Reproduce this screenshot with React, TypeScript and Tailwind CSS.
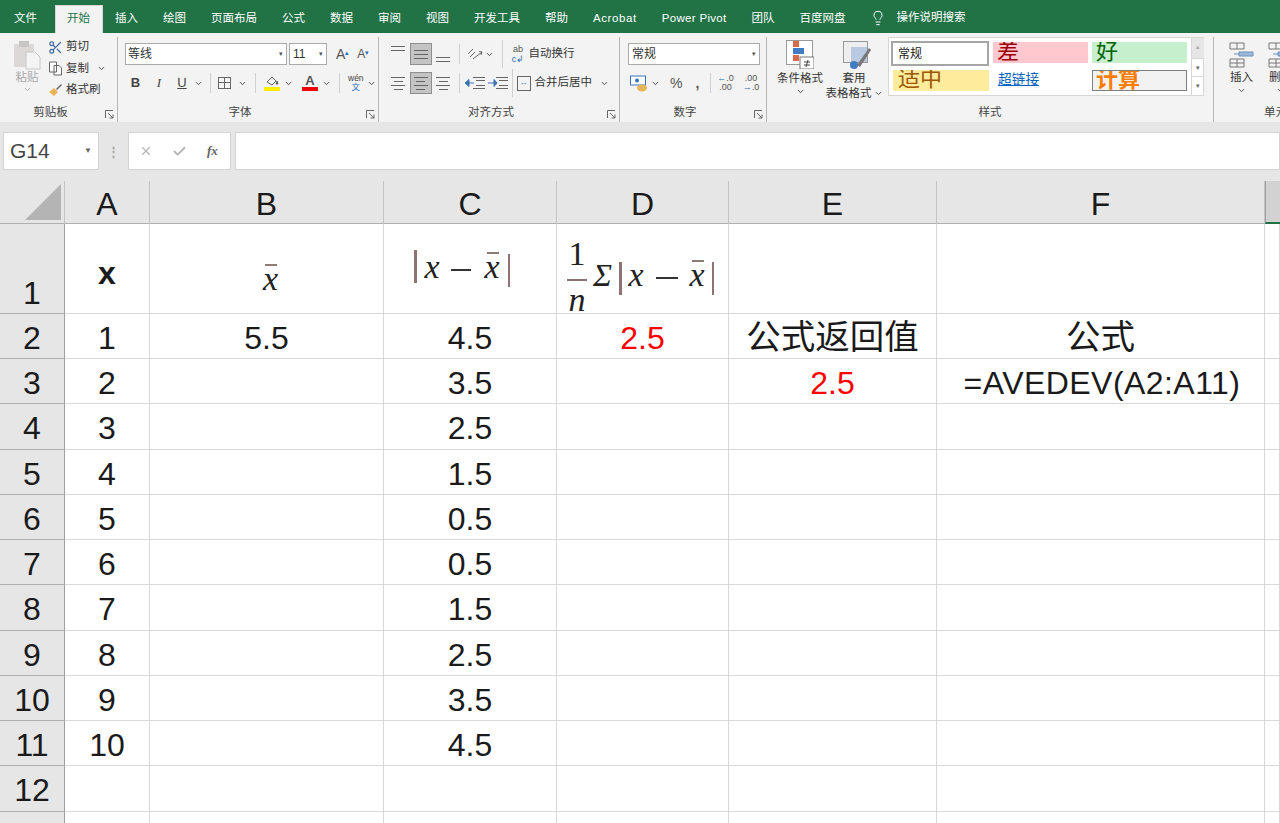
import { ChevronDown, Lightbulb, Scissors, X, Check } from "lucide-react";

const sans = "font-['Liberation_Sans','Noto_Sans_CJK_SC',sans-serif]";
const tabs = [
  { label: "文件", extra: "mr-[5px]" },
  { label: "开始", active: true },
  { label: "插入" },
  { label: "绘图" },
  { label: "页面布局" },
  { label: "公式" },
  { label: "数据" },
  { label: "审阅" },
  { label: "视图" },
  { label: "开发工具" },
  { label: "帮助" },
  { label: "Acrobat", extra: "tracking-[0.6px]" },
  { label: "Power Pivot", extra: "tracking-[0.3px]" },
  { label: "团队" },
  { label: "百度网盘" },
];
const columns = ["A", "B", "C", "D", "E", "F"];
const values = ["4.5", "3.5", "2.5", "1.5", "0.5", "0.5", "1.5", "2.5", "3.5", "4.5"];

function Caret({ className = "" }: { className?: string }) {
  return <ChevronDown size={9} strokeWidth={2.5} className={`shrink-0 text-[#444] ${className}`} />;
}

function Launcher() {
  return (
    <svg width="9" height="9" viewBox="0 0 9 9" className="absolute bottom-[3px] right-[3px] text-[#666]" fill="none" stroke="currentColor">
      <path d="M.5 8V.5H8M3 3l5 5M8 4.500V8H4.500" />
    </svg>
  );
}

function Lines({ rows, active = false, align = "justify-center" }: { rows: number[]; active?: boolean; align?: string }) {
  return (
    <span className={`flex h-[22px] w-[22.5px] shrink-0 flex-col items-center gap-[3px] py-[3px] ${align} ${active ? "border border-[#8f8f8f] bg-[#c4c4c4]" : ""}`}>
      {rows.map((w, i) => (
        <span key={i} className="h-px bg-[#666]" style={{ width: w }} />
      ))}
    </span>
  );
}

function Group({ label, width, inset = 16, launcher = true, children }: { label: string; width: number; inset?: number; launcher?: boolean; children: React.ReactNode }) {
  return (
    <div className="relative flex h-[85px] shrink-0 flex-col border-r border-[#b5b5b5]" style={{ width }}>
      <div className="min-h-0 flex-1">{children}</div>
      <div className="pb-[3px] text-center text-[11.500px] leading-[13px] text-[#444]" style={{ paddingRight: inset }}>{label}</div>
      {launcher && <Launcher />}
    </div>
  );
}

function Ribbon() {
  return (
    <div className="flex h-[89px] items-start bg-[#f3f3f3] pt-[4px] text-[11.500px] text-[#333]">
      <Group label="剪贴板" width={118}>
        <div className="flex">
          <div className="ml-[13px] mt-[4px] flex w-[28px] flex-col items-center text-[#a8a8a8]">
            <svg width="28" height="29" viewBox="0 0 28 29">
              <rect x="1" y="3" width="20" height="23" rx="1" fill="#dcd8d8" />
              <rect x="6" y="0" width="10" height="6" fill="#c9c5c5" />
              <path d="M13 11h9l5 5v12H13z" fill="#f4f4f4" stroke="#c8c8c8" />
            </svg>
            <span className="mt-[1px] leading-[13px]">粘贴</span>
            <Caret className="mt-[1px] opacity-40" />
          </div>
          <div className="ml-[7px] flex flex-col gap-[4.500px] pt-[1.500px]">
            <div className="flex h-[17px] items-center gap-[3px]">
              <Scissors size={15} className="text-[#3f6ea5]" />
              <span>剪切</span>
            </div>
            <div className="flex h-[17px] items-center gap-[3px]">
              <svg width="15" height="15" viewBox="0 0 15 15" fill="#fff" stroke="#666"><path d="M1.500 1h7v10h-7zM6 4.500h5l2.500 2.500v7H6z" /></svg>
              <span>复制</span>
              <Caret className="ml-[5px]" />
            </div>
            <div className="flex h-[17px] items-center gap-[3px]">
              <svg width="15" height="15" viewBox="0 0 15 15"><path d="M1 9l5-4 4 4-4 4z" fill="#e8b458" /><path d="M8 6l5-5 1 1-5 5z" fill="#666" /></svg>
              <span>格式刷</span>
            </div>
          </div>
        </div>
      </Group>
      <Group label="字体" width={261}>
        <div className="ml-[7px] flex items-center gap-[2px] pt-[6px]">
          <div className="flex h-[22px] w-[162px] items-center justify-between border border-[#ababab] bg-white pl-[2px] pr-[3px] text-[12px]">
            等线<span className="text-[7px] text-[#555]">▾</span>
          </div>
          <div className="flex h-[22px] w-[38px] items-center justify-between border border-[#ababab] bg-white pl-[3px] pr-[3px] text-[12px]">
            11<span className="text-[7px] text-[#555]">▾</span>
          </div>
          <span className="ml-[7px] text-[14px] text-[#555]">A<sup className="text-[7px] text-[#2b6cb0]">▴</sup></span>
          <span className="ml-[6px] text-[12px] text-[#555]">A<sup className="text-[7px] text-[#2b6cb0]">▾</sup></span>
        </div>
        <div className="ml-[8px] mt-[7px] flex h-[22px] items-center text-[13px] text-[#444]">
          <span className="w-[19px] text-center font-bold">B</span>
          <span className="ml-[4px] w-[20px] text-center font-['Liberation_Serif',serif] italic">I</span>
          <span className="ml-[3px] w-[20px] text-center underline">U</span>
          <Caret className="ml-[2px]" />
          <span className="mx-[7px] h-[20px] w-px bg-[#d0d0d0]" />
          <span className="grid h-[12px] w-[13px] grid-cols-2 grid-rows-2 border border-[#666]">
            <span className="border-r border-b border-[#666]" />
            <span className="border-b border-[#666]" />
            <span className="border-r border-[#666]" />
          </span>
          <Caret className="ml-[7px]" />
          <span className="mx-[8px] h-[20px] w-px bg-[#d0d0d0]" />
          <span className="flex w-[16px] flex-col items-center">
            <svg width="14" height="12" viewBox="0 0 14 12" fill="none" stroke="#666"><path d="M2 7l5-5 4 4-4 4z" /><path d="M12 6l1 3h-2z" fill="#3b73b5" /></svg>
            <span className="h-[4px] w-[16px] bg-[#ffee00]" />
          </span>
          <Caret className="ml-[4px]" />
          <span className="ml-[9px] flex w-[16px] flex-col items-center">
            <span className="text-[13px] font-bold leading-[12px] text-[#555]">A</span>
            <span className="h-[4px] w-[16px] bg-[#ef0000]" />
          </span>
          <Caret className="ml-[4px]" />
          <span className="mx-[8px] h-[20px] w-px bg-[#d0d0d0]" />
          <span className="flex flex-col items-center text-[8.500px] leading-[9px]">
            wén<span className="text-[#2b6cb0]">文</span>
          </span>
          <Caret className="ml-[3px]" />
        </div>
      </Group>
      <Group label="对齐方式" width={241}>
        <div className="ml-[8px] mt-[6px] flex h-[22px] items-center">
          <Lines rows={[14, 14]} align="justify-start" />
          <Lines rows={[14, 14, 14]} active />
          <Lines rows={[14, 14]} align="justify-end" />
          <span className="mx-[4px] h-[20px] w-px bg-[#d0d0d0]" />
          <svg width="18" height="16" viewBox="0 0 18 16" fill="none" stroke="#666" className="ml-[2px]">
            <path d="M2 8l5-5M4 11l5-5M7 13L16 6M13 5.500l3 .5-1 3" />
          </svg>
          <Caret className="ml-[1px]" />
          <span className="ml-[8px] mr-[8px] h-[28px] w-px bg-[#d0d0d0]" />
          <span className="ml-[1px] flex w-[13px] flex-col items-center text-[9px] leading-[10px] text-[#555]">
            <span>ab</span>
            <span className="text-[#2b6cb0]">c↲</span>
          </span>
          <span className="ml-[4px] text-[11.500px]">自动换行</span>
        </div>
        <div className="ml-[8px] mt-[7px] flex h-[22px] items-center">
          <Lines rows={[14, 9, 14, 9]} />
          <Lines rows={[14, 9, 14, 9]} active />
          <Lines rows={[14, 9, 14, 9]} />
          <span className="mx-[4px] h-[20px] w-px bg-[#d0d0d0]" />
          <svg width="22" height="14" viewBox="0 0 22 14" fill="none" stroke="#666" className="shrink-0">
            <path d="M9 1.500h12M12 4.500h9M12 9.500h9M9 12.500h12" />
            <path d="M1 7h9M5 3.500L1 7l4 3.500z" stroke="#3b73b5" fill="#3b73b5" />
          </svg>
          <svg width="22" height="14" viewBox="0 0 22 14" fill="none" stroke="#666" className="ml-[1px] shrink-0">
            <path d="M9 1.500h12M12 4.500h9M12 9.500h9M9 12.500h12" />
            <path d="M1 7h9M7 3.500L10 7l-3 3.500z" stroke="#3b73b5" fill="#3b73b5" />
          </svg>
          <span className="ml-[3px] mr-[4px] h-[28px] w-px bg-[#d0d0d0]" />
          <span className="flex h-[15px] w-[14px] shrink-0 items-center justify-center border border-[#666] text-[8px] leading-none text-[#2b6cb0]">↔</span>
          <span className="ml-[4px] whitespace-nowrap text-[11.500px]">合并后居中</span>
          <Caret className="ml-[8px]" />
        </div>
      </Group>
      <Group label="数字" width={147}>
        <div className="ml-[8px] mt-[6px] flex h-[22px] w-[132px] items-center justify-between border border-[#ababab] bg-white pl-[3px] pr-[3px] text-[12px]">
          常规<span className="text-[7px] text-[#555]">▾</span>
        </div>
        <div className="ml-[10px] mt-[6px] flex h-[24px] items-center text-[14px] text-[#555]">
          <svg width="18" height="17" viewBox="0 0 18 17"><rect x="0.500" y="1" width="15" height="9" fill="#fff" stroke="#3b73b5" /><circle cx="7" cy="5.500" r="2" fill="#3b73b5" /><ellipse cx="12" cy="13" rx="5" ry="3.500" fill="#e8b458" /></svg>
          <Caret className="ml-[3px]" />
          <span className="ml-[10px]">%</span>
          <span className="ml-[13px] font-bold">,</span>
          <span className="ml-[11px] mr-[6px] h-[20px] w-px bg-[#d0d0d0]" />
          <span className="text-center text-[9px] leading-[9px]"><span className="text-[#2b6cb0]">←</span>.0<br />.00</span>
          <span className="ml-[9px] text-center text-[9px] leading-[9px]">.00<br /><span className="text-[#2b6cb0]">→</span>.0</span>
        </div>
      </Group>
      <Group label="样式" width={447} inset={0} launcher={false}>
        <div className="flex pl-[9px]">
          <div className="flex w-[48px] shrink-0 flex-col items-center pt-[3px]">
            <svg width="28" height="29" viewBox="0 0 28 29">
              <rect x="0.500" y="0.500" width="26" height="24" fill="#fff" stroke="#999" />
              <rect x="7" y="1" width="6" height="6" fill="#d9694b" />
              <rect x="7" y="8" width="11" height="6" fill="#3f7cc4" />
              <rect x="7" y="15" width="6" height="6" fill="#d9694b" />
              <rect x="14" y="17" width="14" height="12" fill="#fff" stroke="#777" />
              <path d="M18 22h6M18 25h6M22 20l-2 7" stroke="#444" />
            </svg>
            <span className="mt-[2px] whitespace-nowrap leading-[15px]">条件格式</span>
            <Caret className="mt-[1px]" />
          </div>
          <div className="ml-[2px] flex w-[56px] shrink-0 flex-col items-center pt-[4px]">
            <svg width="28" height="28" viewBox="0 0 28 28" className="ml-[6px]">
              <rect x="0.500" y="0.500" width="24" height="21" fill="#eee" stroke="#999" />
              <rect x="8" y="6" width="16" height="15" fill="#b9c9e2" />
              <path d="M14 24l12-17 2 2-11 17z" fill="#777" />
              <circle cx="11" cy="24" r="4" fill="#3f7cc4" />
            </svg>
            <span className="mt-[2px] leading-[15px]">套用</span>
            <span className="flex items-center gap-[2px] whitespace-nowrap leading-[14px]">表格格式<Caret /></span>
          </div>
          <div className="ml-[6px] flex h-[59px] w-[316px] shrink-0 items-stretch border border-[#d6d6d6] bg-white">
            <div className="w-[302px] shrink-0 pl-[2px] pt-[3px] text-[22px]">
              <div className="grid grid-cols-[98px_95px_95px] gap-x-[4px] gap-y-[4px]">
                <div className="flex h-[25px] items-center border-2 border-[#a6a6a6] pl-[5px] text-[12px] text-[#222]">常规</div>
                <div className="mt-[1px] h-[21px] overflow-hidden bg-[#ffc7ce] pl-[4px] leading-[20px] text-[#9c0006]">差</div>
                <div className="mt-[1px] h-[21px] overflow-hidden bg-[#c6efce] pl-[4px] leading-[20px] text-[#006100]">好</div>
                <div className="ml-[2px] h-[21px] overflow-hidden bg-[#ffeb9c] pl-[5px] leading-[18px] text-[#9c5700]">适中</div>
                <div className="pl-[5px] text-[13.700px] leading-[20px] text-[#0563c1] underline">超链接</div>
                <div className="h-[21px] overflow-hidden border border-[#7f7f7f] bg-[#f2f2f2] pl-[3px] font-bold leading-[18px] text-[#fa7d00]">计算</div>
              </div>
            </div>
            <div className="flex w-[13px] shrink-0 flex-col border-l border-[#d6d6d6] text-center text-[7px] leading-[18px] text-[#666]">
              <span className="h-[20px] bg-[#e6e6e6] text-[#aaa]">▴</span>
              <span className="h-[19px] border-y border-[#d6d6d6]">▾</span>
              <span className="h-[18px]">▾</span>
            </div>
          </div>
        </div>
      </Group>
      <div className="relative flex h-[85px] min-w-0 flex-1 flex-col overflow-hidden">
        <div className="flex flex-1 gap-[14px] whitespace-nowrap pl-[15px] pt-[4px]">
          {["插入", "删除"].map((t) => (
            <div key={t} className="flex w-[25px] shrink-0 flex-col items-center">
              <svg width="25" height="27" viewBox="0 0 25 27" fill="none" stroke="#777">
                <path d="M1 2h14v6H1zM8 2v6M1 18h14v8H1zM8 18v8M1 22h14" />
                <path d="M10 11h14v4H10zM5 13h5" fill="#9fb8d8" stroke="#6b90bd" />
              </svg>
              <span className="mt-[2px] leading-[14px]">{t}</span>
              <Caret className="mt-[2px]" />
            </div>
          ))}
        </div>
        <div className="whitespace-nowrap pb-[3px] pl-[50px] text-[11.500px] leading-[13px] text-[#444]">单元格</div>
      </div>
    </div>
  );
}

function FormulaBar() {
  return (
    <div className="flex h-[59px] items-start gap-[4px] bg-[#e6e6e6] pl-[3px] pt-[10px]">
      <div className="flex h-[38px] w-[96px] items-center justify-between border border-[#d4d4d4] bg-white pl-[6px] pr-[6px] text-[21px] text-[#444]">
        G14<span className="text-[8px] text-[#666]">▼</span>
      </div>
      <div className="flex h-[38px] w-[21px] items-center justify-center text-[13px] font-bold leading-none text-[#aaa]">⋮</div>
      <div className="flex h-[38px] w-[103px] items-center border border-[#d4d4d4] bg-white pl-[10px] text-[#b5b5b5]">
        <X size={14} />
        <Check size={15} strokeWidth={3} className="ml-[19px]" />
        <span className="ml-[20px] font-['Liberation_Serif',serif] text-[13px] font-bold italic text-[#666]">fx</span>
      </div>
      <div className="h-[38px] flex-1 border border-[#d4d4d4] bg-white" />
    </div>
  );
}

function XBar() {
  return (
    <span className="relative inline-block">
      <span className="absolute left-[2px] right-[1px] top-[11px] h-[2px] bg-[#8f7a7a]" />
      x
    </span>
  );
}

function Pipe() {
  return <span className="inline-block h-[33px] w-[2.500px] shrink-0 bg-[#8d7373] align-middle" />;
}

function Minus({ width }: { width: number }) {
  return <span className="inline-block h-[2px] bg-[#333] align-middle" style={{ width }} />;
}

function Sheet() {
  const math = "font-['Liberation_Serif',serif] italic font-medium text-[#222]";
  const header = "flex items-center justify-center border-r border-b border-r-[#9e9e9e] border-b-[#b0b0b0] bg-[#e6e6e6] pt-[4px] text-[32px] text-[#1a1a1a]";
  const colHeader = "flex items-center justify-center border-r border-b border-r-[#c4c4c4] border-b-[#b0b0b0] bg-[#e6e6e6] pt-[4px] text-[32px] text-[#1a1a1a]";
  const cell = "flex items-center justify-center border-r border-b border-[#d9d9d9] bg-white pt-[4px] text-[32px] text-[#1a1a1a] whitespace-nowrap overflow-hidden";
  return (
    <div className={`grid h-[642px] grid-cols-[65px_85px_234px_173px_172px_208px_328px_15px] grid-rows-[43px_90px_45px_repeat(10,45.250px)_45px] overflow-hidden ${sans}`}>
      <div className="relative border-r border-b border-r-[#c4c4c4] border-b-[#b0b0b0] bg-[#e6e6e6]">
        <span className="absolute bottom-[3px] right-[3px] h-0 w-0 border-b-[36px] border-l-[36px] border-b-[#b4b4b4] border-l-transparent" />
      </div>
      {columns.map((c) => (
        <div key={c} className={colHeader}>{c}</div>
      ))}
      <div className="border-b-2 border-l border-b-[#217346] border-l-[#a0a0a0] bg-[#d2d2d2]" />

      <div className={`${header} items-end leading-[40px]`}>1</div>
      <div className={`${cell} pt-[8px] text-[28px] font-bold`}>x</div>
      <div className={`${cell} pl-[8px] pt-[20px] text-[34px] ${math}`}><XBar /></div>
      <div className={`${cell} justify-start pb-[8px] pl-[30px] pt-0 text-[34px] ${math}`}>
        <Pipe />
        <span className="ml-[8px]">x</span>
        <span className="ml-[11px]"><Minus width={20} /></span>
        <span className="ml-[14px]"><XBar /></span>
        <span className="ml-[8px]"><Pipe /></span>
      </div>
      <div className={`${cell} justify-start pl-[10px] pt-0 text-[34px] ${math}`}>
        <span className="mt-[9px] flex w-[20px] shrink-0 flex-col items-center self-start">
          <span className="mb-[8px] font-normal not-italic leading-[34px]">1</span>
          <span className="h-[2px] w-[20px] shrink-0 bg-[#8d7373]" />
          <span className="leading-[38px]">n</span>
        </span>
        <span className="ml-[6px] flex items-center pt-[8px]">
          <span className="text-[32px]">Σ</span>
          <span className="ml-[7px]"><Pipe /></span>
          <span className="ml-[7px]">x</span>
          <span className="ml-[12px]"><Minus width={22} /></span>
          <span className="ml-[12px]"><XBar /></span>
          <span className="ml-[7px]"><Pipe /></span>
        </span>
      </div>
      <div className={cell} />
      <div className={cell} />
      <div className={cell} />

      {values.map((v, i) => (
        <Row key={v + i} n={i + 2} a={String(i + 1)} c={v} i={i} header={header} cell={cell} />
      ))}
      <div className={header}>12</div>
      {[0, 1, 2, 3, 4, 5, 6].map((k) => (
        <div key={k} className={cell} />
      ))}
      <div className={header} />
      {[0, 1, 2, 3, 4, 5, 6].map((k) => (
        <div key={k} className={cell} />
      ))}
    </div>
  );
}

function Row({ n, a, c, i, header, cell }: { n: number; a: string; c: string; i: number; header: string; cell: string }) {
  return (
    <>
      <div className={header}>{n}</div>
      <div className={cell}>{a}</div>
      <div className={cell}>{i === 0 ? "5.5" : ""}</div>
      <div className={cell}>{c}</div>
      <div className={`${cell} text-[#ff0000]`}>{i === 0 ? "2.5" : ""}</div>
      {i === 0 ? (
        <div className={`${cell} text-[34.500px]`}>公式返回值</div>
      ) : (
        <div className={`${cell} text-[#ff0000]`}>{i === 1 ? "2.5" : ""}</div>
      )}
      {i === 0 ? (
        <div className={`${cell} text-[34.500px]`}>公式</div>
      ) : (
        <div className={`${cell} pl-[3px] tracking-[0.45px]`}>{i === 1 ? "=AVEDEV(A2:A11)" : ""}</div>
      )}
      <div className={cell} />
    </>
  );
}

export default function App() {
  return (
    <div className={`h-[823px] w-[1280px] overflow-hidden bg-white ${sans}`}>
      <div className="flex h-[33px] items-end bg-[#217346] pl-[1.500px] text-[11.500px] text-white">
        {tabs.map((t) => (
          <div key={t.label} className={`flex h-[28px] items-center whitespace-nowrap border-x border-t px-[11.500px] pb-[2px] ${t.extra ?? ""} ${t.active ? "border-[#d5d5d5] bg-[#f3f3f3] text-[#217346]" : "border-transparent"}`}>
            {t.label}
          </div>
        ))}
        <Lightbulb size={16} strokeWidth={1.5} className="mb-[7px] ml-[11.500px]" />
        <span className="mb-[7px] ml-[11px]">操作说明搜索</span>
      </div>
      <Ribbon />
      <FormulaBar />
      <Sheet />
    </div>
  );
}
